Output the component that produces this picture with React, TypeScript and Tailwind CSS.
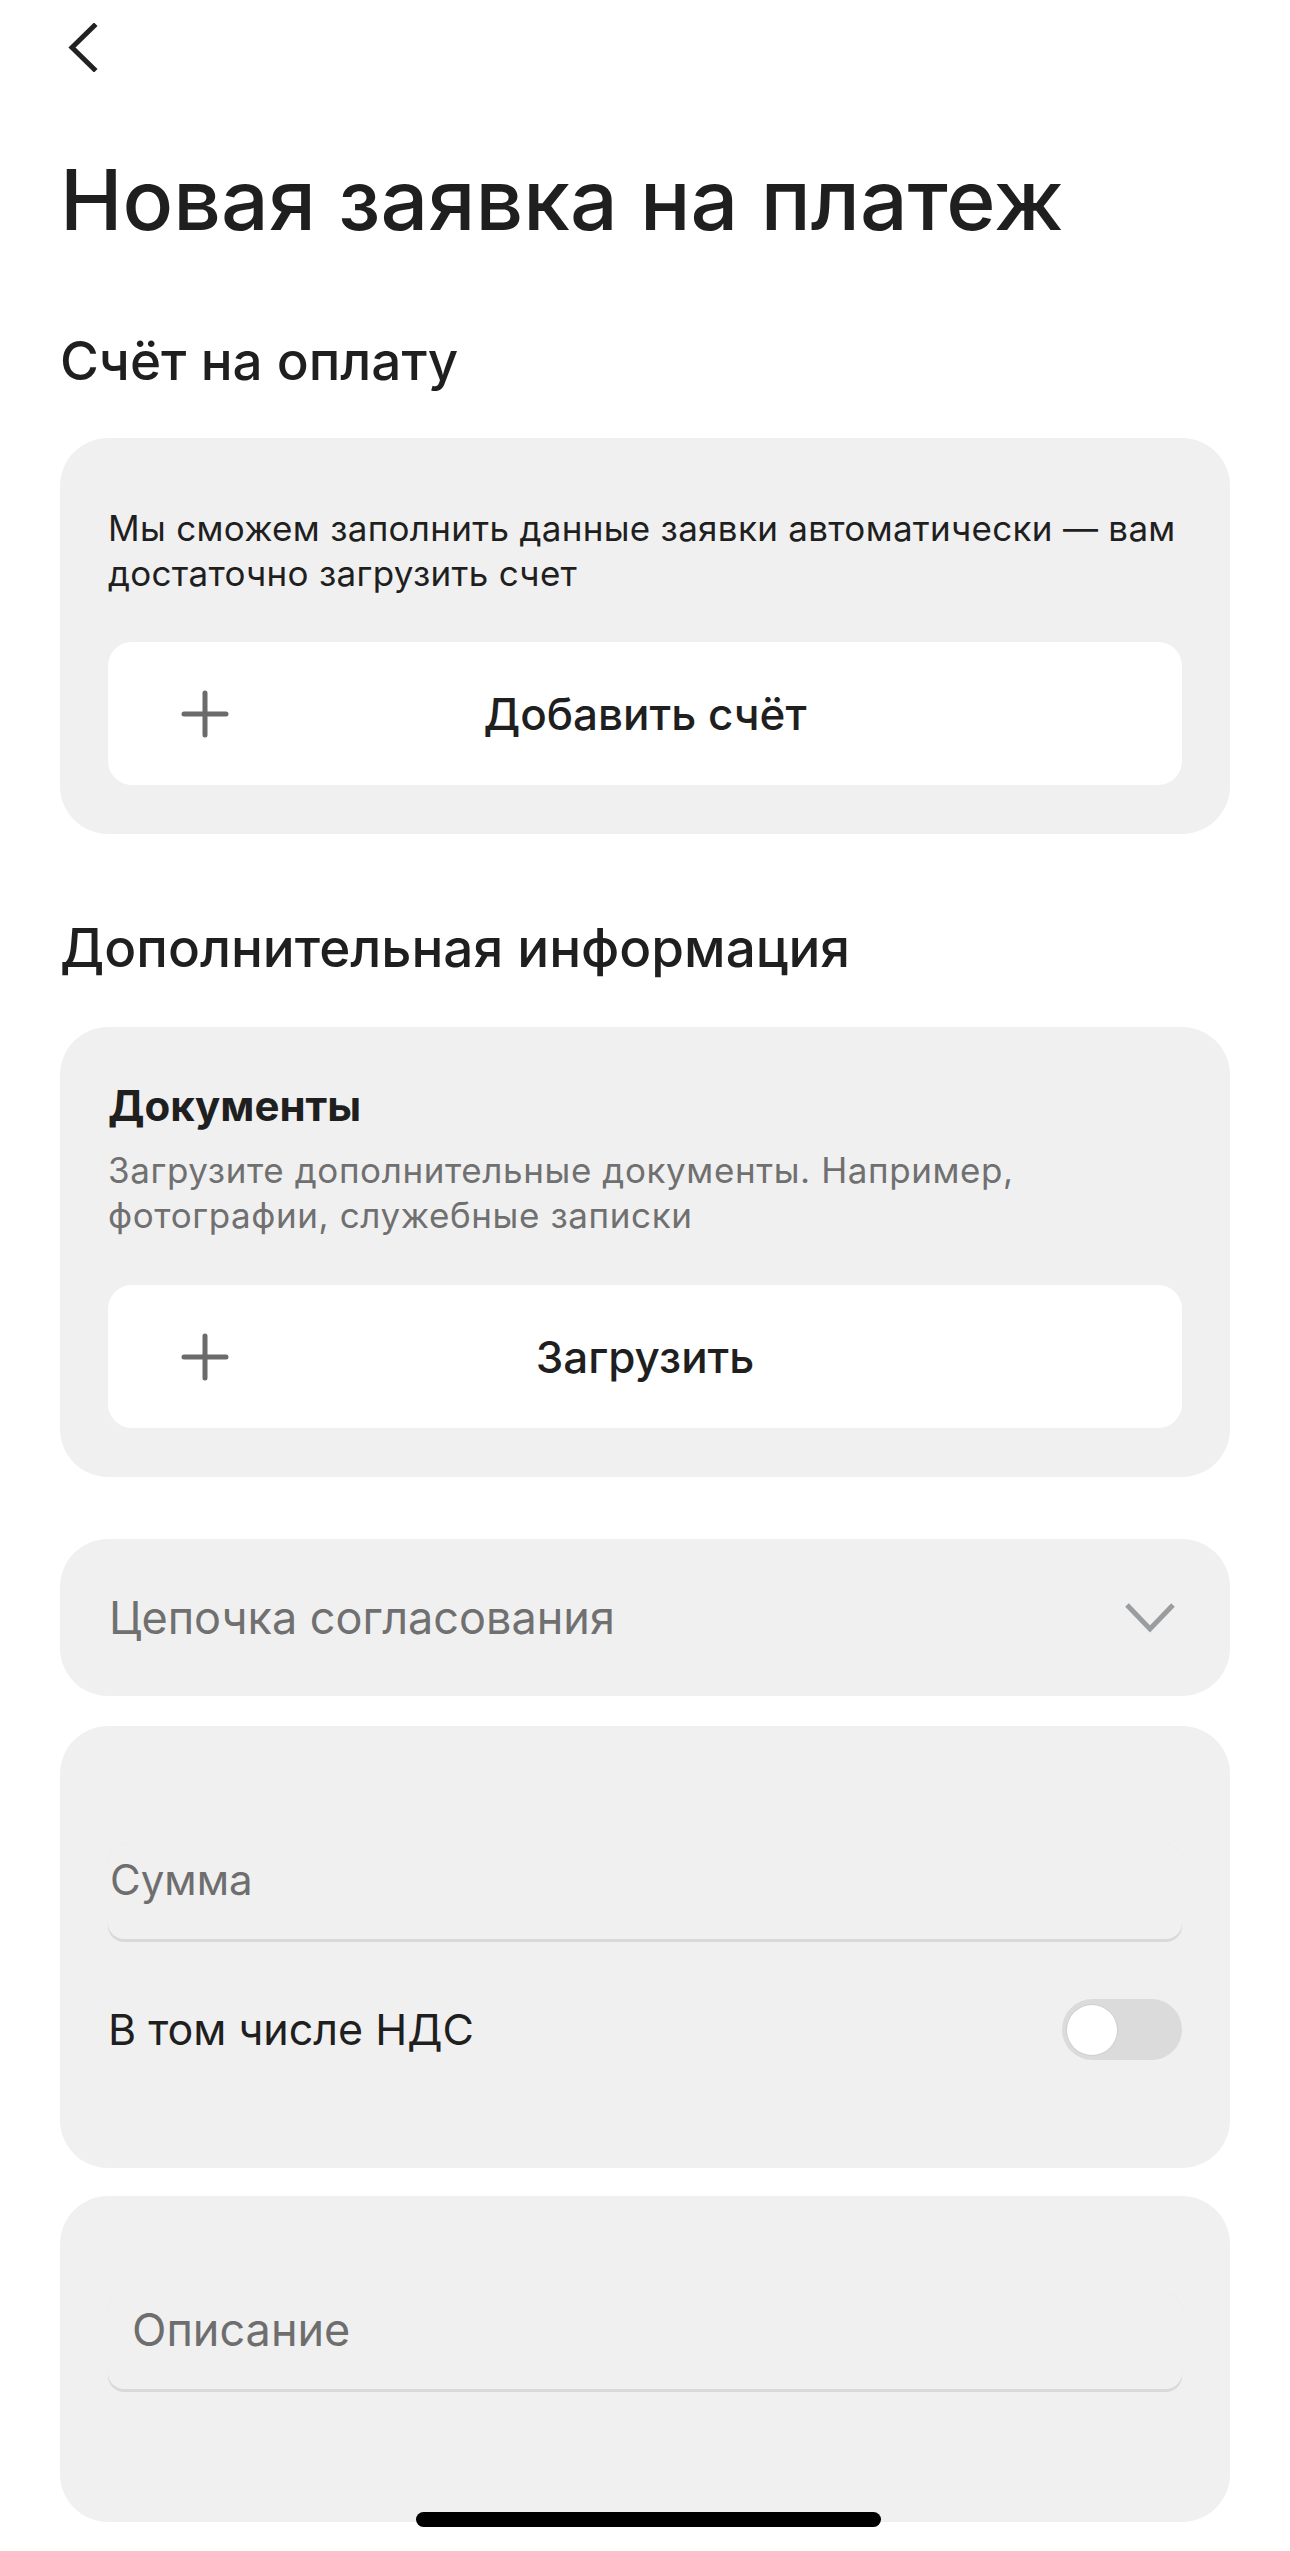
import React from "react";

const font = { fontFamily: "Inter, 'Noto Sans', sans-serif" };

export default function App() {
    return (
        <div style={font} className="relative min-h-[2551px] w-full overflow-hidden bg-white text-[#1f1f1f]">
            <div className="px-[60px]">
                <button className="block pt-[23px] pl-[8px] outline-none">
                    <ChevronLeft />
                </button>

                <h1 className="mt-[86px] text-[84px] leading-[84px] font-medium">Новая заявка на платеж</h1>

                <SectionTitle className="mt-[93px]">Счёт на оплату</SectionTitle>

                <Card className="mt-[50px] pt-[68px] pb-[49px]">
                    <p className="text-[35px] leading-[45px] tracking-[0.3px]">
                        Мы сможем заполнить данные заявки автоматически — вам
                        <br />
                        достаточно загрузить счет
                    </p>
                    <AddButton className="mt-[46px]">Добавить счёт</AddButton>
                </Card>

                <SectionTitle className="mt-[88px]">Дополнительная информация</SectionTitle>

                <Card className="mt-[52px] pt-[56px] pb-[49px]">
                    <h3 className="text-[42px] leading-[45px] font-bold">Документы</h3>
                    <p className="mt-[20px] text-[35px] leading-[45px] tracking-[0.6px] text-[#707070]">
                        Загрузите дополнительные документы. Например,
                        <br />
                        фотографии, служебные записки
                    </p>
                    <AddButton className="mt-[47px]">Загрузить</AddButton>
                </Card>

                <div className="mt-[62px] flex h-[157px] items-center justify-between rounded-[48px] bg-[#f0f0f0] pl-[49px] pr-[54px]">
                    <span className="text-[45px] text-[#707070]">Цепочка согласования</span>
                    <ChevronDown />
                </div>

                <Card className="mt-[30px] pt-[118px] pb-[108px]">
                    <Field label="Сумма" className="pl-[2px] text-[42px]" />
                    <div className="mt-[60px] flex items-center justify-between">
                        <span className="text-[43px] leading-[61px]">В том числе НДС</span>
                        <Toggle />
                    </div>
                </Card>

                <Card className="mt-[28px] h-[326px] pt-[98px]">
                    <Field label="Описание" className="pl-[24px] text-[45px]" />
                </Card>
            </div>

            <div className="absolute left-[416px] bottom-[24px] h-[15px] w-[465px] rounded-full bg-black" />
        </div>
    );
}

const SectionTitle = ({ children, className }: { children: React.ReactNode; className?: string }) => {
    return <h2 className={`text-[53px] leading-[53px] font-medium ${className ?? ""}`}>{children}</h2>;
};

const Card = ({ children, className }: { children: React.ReactNode; className?: string }) => {
    return <div className={`rounded-[48px] bg-[#f0f0f0] px-[48px] ${className ?? ""}`}>{children}</div>;
};

const AddButton = ({ children, className }: { children: React.ReactNode; className?: string }) => {
    return (
        <button
            className={`grid h-[143px] w-full grid-cols-[1fr_auto_1fr] items-center rounded-[24px] bg-white px-[73px] outline-none ${className ?? ""}`}
        >
            <PlusIcon />
            <span className="text-[44px] font-medium text-[#1f1f1f]">{children}</span>
            <span />
        </button>
    );
};

const Field = ({ label, className }: { label: string; className?: string }) => {
    return (
        <div
            className={`h-[95px] rounded-[16px] bg-[#f0f0f0] pt-[11px] shadow-[0_3px_0_#d9d9d9,0_0_1px_rgba(0,0,0,0.06)] ${className ?? ""}`}
        >
            <span className="block leading-[50px] text-[#6e6e6e]">{label}</span>
        </div>
    );
};

const Toggle = () => {
    return (
        <div className="flex h-[61px] w-[120px] items-center rounded-full bg-[#dbdbdb] px-[5px]">
            <div className="h-[50px] w-[50px] rounded-full bg-white shadow-[0_0_0_1px_#d0d0d0]" />
        </div>
    );
};

const ChevronLeft = () => (
    <svg width="30" height="49" viewBox="0 0 30 49" fill="none">
        <path d="M26 3 L4 24.5 L26 46" stroke="#222" strokeWidth="5" strokeLinecap="square" strokeLinejoin="miter" />
    </svg>
);

const PlusIcon = () => (
    <svg width="48" height="48" viewBox="0 0 48 48" fill="none" className="justify-self-start">
        <path d="M24 3 V45 M3 24 H45" stroke="#6b6b6b" strokeWidth="5" strokeLinecap="round" />
    </svg>
);

const ChevronDown = () => (
    <svg width="52" height="32" viewBox="0 0 52 32" fill="none">
        <path d="M3 3 L26 27 L49 3" stroke="#9a9da0" strokeWidth="5" />
    </svg>
);
